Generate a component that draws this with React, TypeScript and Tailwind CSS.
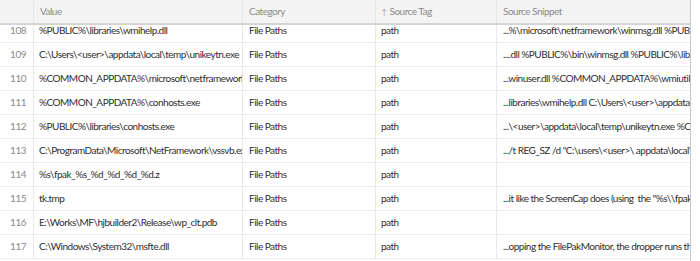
const rows = [
  { n: 108, value: "%PUBLIC%\\libraries\\wmihelp.dll", snippet: "...%\\microsoft\\netframework\\winmsg.dll %PUBLIC%\\libraries" },
  { n: 109, value: "C:\\Users\\<user>\\appdata\\local\\temp\\unikeytn.exe", snippet: "....dll %PUBLIC%\\bin\\winmsg.dll %PUBLIC%\\libraries" },
  { n: 110, value: "%COMMON_APPDATA%\\microsoft\\netframework\\winmsg.dll", snippet: "...winuser.dll %COMMON_APPDATA%\\wmiutil.dll" },
  { n: 111, value: "%COMMON_APPDATA%\\conhosts.exe", snippet: "...libraries\\wmihelp.dll C:\\Users\\<user>\\appdata" },
  { n: 112, value: "%PUBLIC%\\libraries\\conhosts.exe", snippet: "...\\<user>\\appdata\\local\\temp\\unikeytn.exe %COMMON" },
  { n: 113, value: "C:\\ProgramData\\Microsoft\\NetFramework\\vssvb.exe", snippet: ".../t REG_SZ /d \"C:\\users\\<user>\\ appdata\\local\\temp" },
  { n: 114, value: "%s\\fpak_%s_%d_%d_%d_%d.z", snippet: "" },
  { n: 115, value: "tk.tmp", snippet: "...it like the ScreenCap does (using  the \"%s\\\\fpak" },
  { n: 116, value: "E:\\Works\\MF\\hjbuilder2\\Release\\wp_clt.pdb", snippet: "" },
  { n: 117, value: "C:\\Windows\\System32\\msfte.dll", snippet: "...opping the FilePakMonitor, the dropper runs the" },
];

function Cell({ w, children, className = "" }: { w: string; children?: React.ReactNode; className?: string }) {
  return (
    <div className={`${w} shrink-0 h-full flex items-center border-r border-[#e8e8e8] overflow-hidden whitespace-pre ${className}`}>
      {children}
    </div>
  );
}

export default function App() {
  return (
    <div className="w-[700px] h-[261px] bg-white overflow-hidden text-[10px] tracking-[-0.5px] font-['Lato',sans-serif]">
      <div className="w-[691px] h-full border-r border-[#c8c8c8] flex flex-col">
        <div className="h-[25px] shrink-0 flex bg-[#f4f4f4] border-b-2 border-[#d4d4d4] text-[#8a8a8a]">
          <Cell w="w-[34px]" />
          <Cell w="w-[209px]" className="pl-[6px]">Value</Cell>
          <Cell w="w-[133px]" className="pl-[6px]">Category</Cell>
          <Cell w="w-[121px]" className="pl-[5px]">
            <span className="text-[8px] mr-[3px] text-[#aaa]">↑</span>Source Tag
          </Cell>
          <div className="flex-1 h-full flex items-center pl-[6px] whitespace-pre overflow-hidden">Source Snippet</div>
        </div>
        <div className="flex-1 overflow-hidden">
          <div className="-mt-[6px]">
            {rows.map((r) => (
              <div key={r.n} className="h-[24px] flex border-b border-[#ececec] text-[#2e2e2e]">
                <Cell w="w-[34px]" className="justify-end pr-[7px] text-[#8a8a8a]">{r.n}</Cell>
                <Cell w="w-[209px]" className="pl-[5px]">{r.value}</Cell>
                <Cell w="w-[133px]" className="pl-[6px]">File Paths</Cell>
                <Cell w="w-[121px]" className="pl-[5px]">path</Cell>
                <div className="flex-1 h-full flex items-center pl-[6px] whitespace-pre overflow-hidden">{r.snippet}</div>
              </div>
            ))}
          </div>
        </div>
      </div>
    </div>
  );
}
